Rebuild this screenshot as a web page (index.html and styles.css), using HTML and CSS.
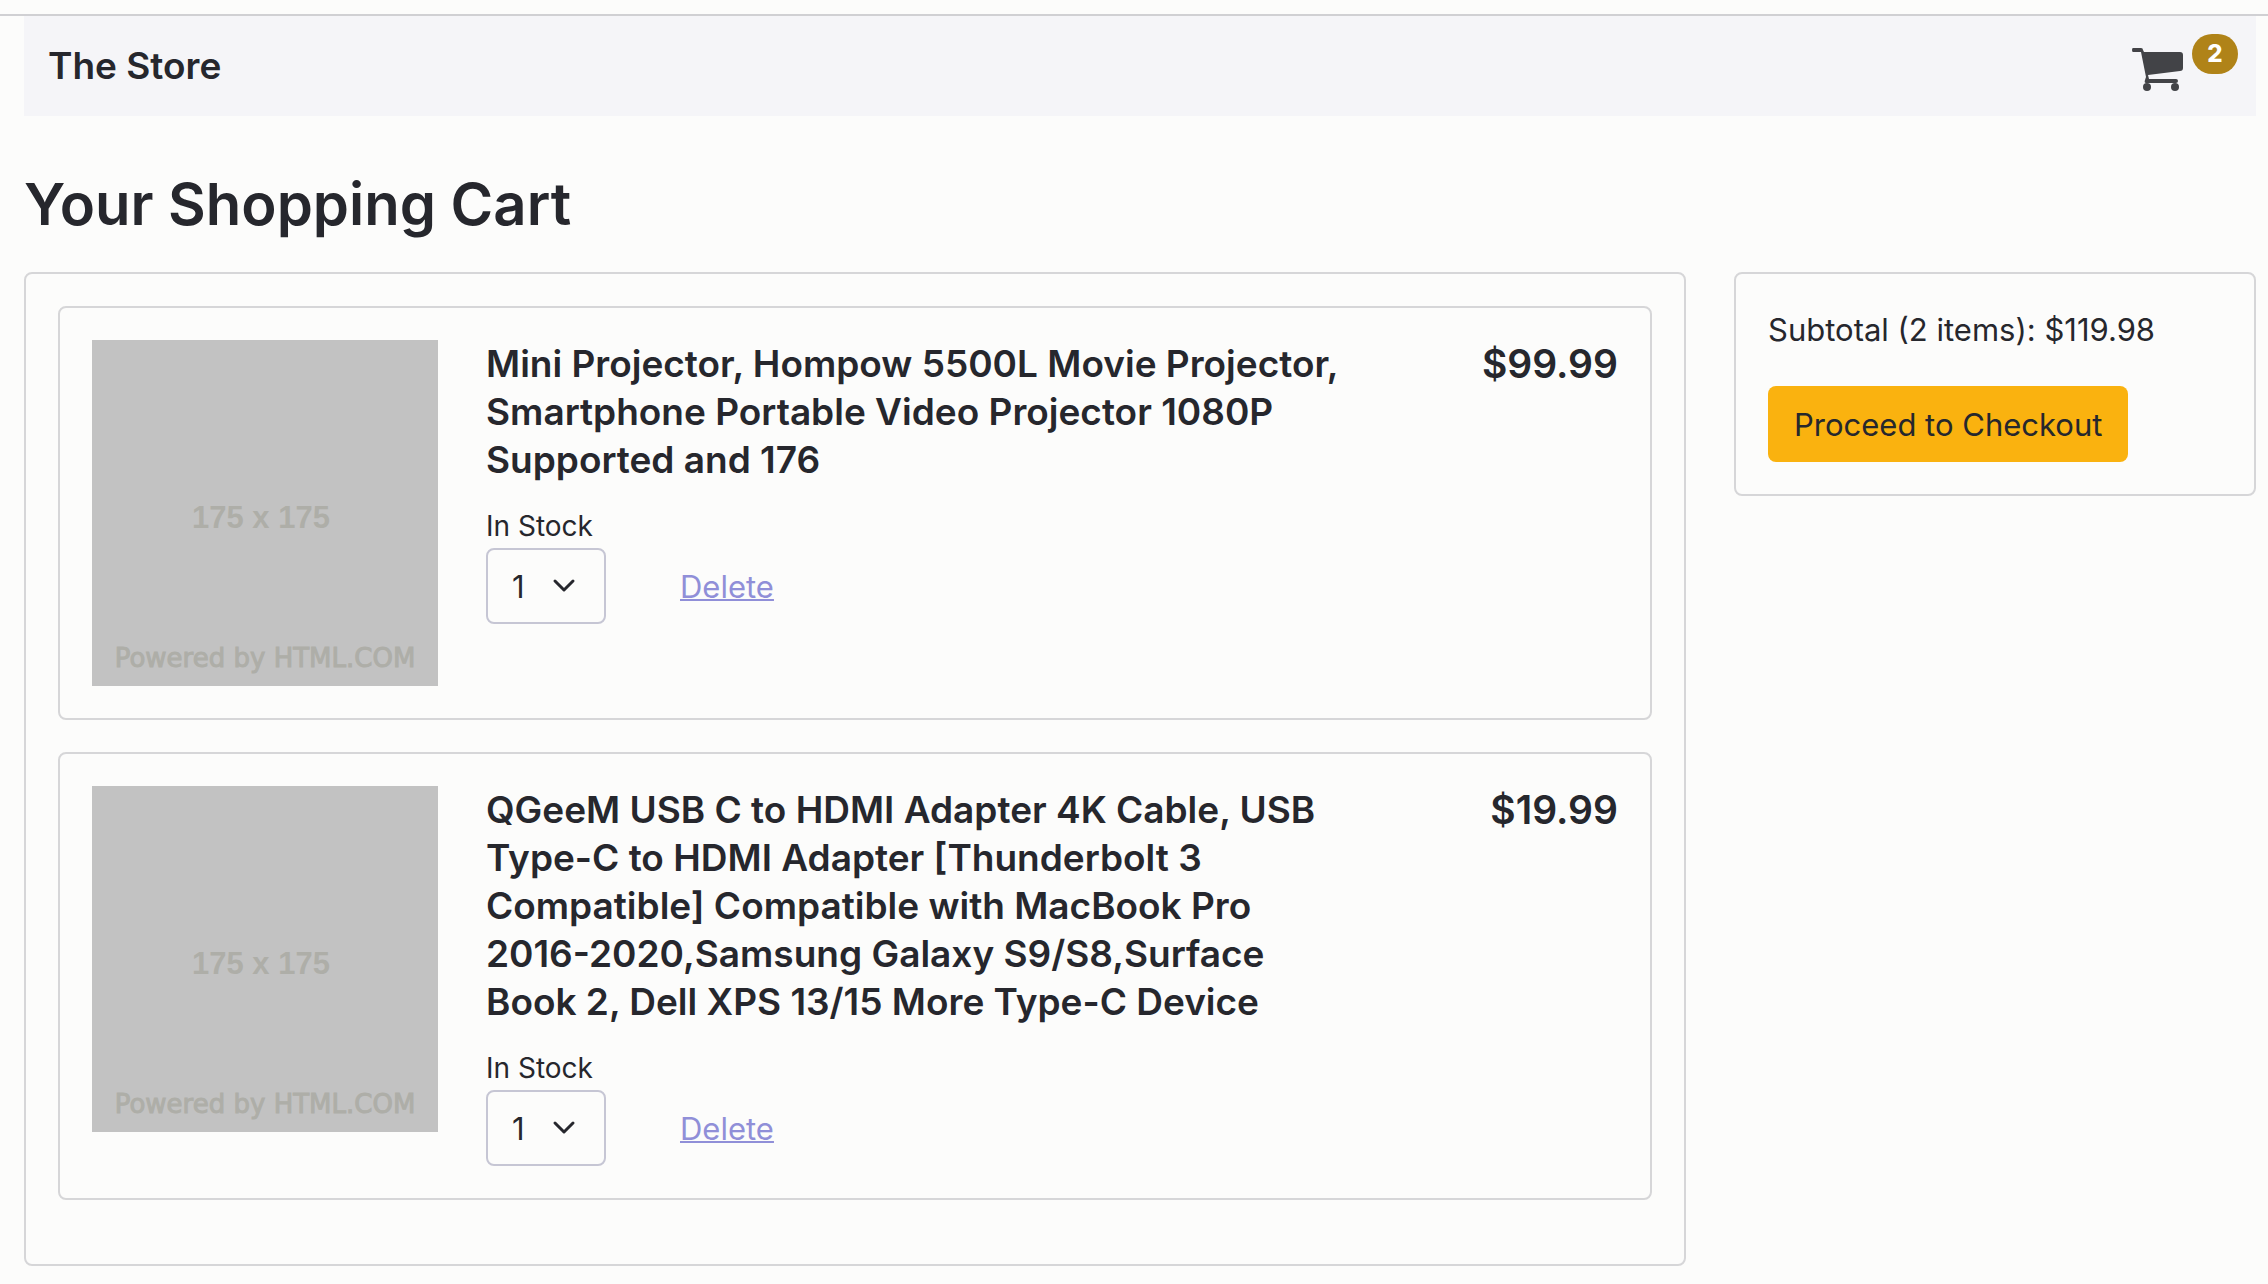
FILE: index.html
```html
<!DOCTYPE html>
<html lang="en">
<head>
<meta charset="utf-8">
<meta name="viewport" content="width=device-width, initial-scale=1">
<title>The Store</title>
<link rel="stylesheet" href="styles.css">
</head>
<body>
<div class="page">
  <header class="navbar">
    <a class="brand" href="#">The Store</a>
    <a class="cart-link" href="#" aria-label="Shopping cart">
      <svg class="cart-icon" viewBox="0 0 52 44" aria-hidden="true">
        <path d="M1 0H9Q11 0 11 2L12 4H48Q51 4 51 7V20Q51 23 48 23L16 27L17 31H44Q46 31 46 33Q46 35 44 35H14Q12 35 13 32L14 29L9 4H1Q0 4 0 2Q0 0 1 0Z"/>
        <circle cx="15" cy="39" r="4"/>
        <circle cx="43" cy="39" r="4"/>
      </svg>
      <span class="badge">2</span>
    </a>
  </header>

  <main>
    <h1 class="title">Your Shopping Cart</h1>
    <div class="columns">
      <section class="card items">
        <article class="card item">
          <div class="thumb">
            <span class="thumb-size">175 x 175</span>
            <span class="thumb-credit">Powered by HTML.COM</span>
          </div>
          <div class="details">
            <h2 class="name">Mini Projector, Hompow 5500L Movie Projector, Smartphone Portable Video Projector 1080P Supported and 176</h2>
            <label class="stock" for="qty-1">In Stock</label>
            <div class="controls">
              <span class="select-wrap">
                <select class="qty" id="qty-1"><option>1</option><option>2</option><option>3</option></select>
                <svg class="chevron" viewBox="0 0 24 16" aria-hidden="true"><path d="M3 3L12 12L21 3"/></svg>
              </span>
              <a class="delete" href="#">Delete</a>
            </div>
          </div>
          <p class="price">$99.99</p>
        </article>
        <article class="card item">
          <div class="thumb">
            <span class="thumb-size">175 x 175</span>
            <span class="thumb-credit">Powered by HTML.COM</span>
          </div>
          <div class="details">
            <h2 class="name">QGeeM USB C to HDMI Adapter 4K Cable, USB Type-C to HDMI Adapter [Thunderbolt 3 Compatible] Compatible with MacBook Pro 2016-2020,Samsung Galaxy S9/S8,Surface Book 2, Dell XPS 13/15 More Type-C Device</h2>
            <label class="stock" for="qty-2">In Stock</label>
            <div class="controls">
              <span class="select-wrap">
                <select class="qty" id="qty-2"><option>1</option><option>2</option><option>3</option></select>
                <svg class="chevron" viewBox="0 0 24 16" aria-hidden="true"><path d="M3 3L12 12L21 3"/></svg>
              </span>
              <a class="delete" href="#">Delete</a>
            </div>
          </div>
          <p class="price">$19.99</p>
        </article>
      </section>
      <aside class="card summary">
        <p class="subtotal">Subtotal (2 items): $119.98</p>
        <button class="checkout" type="button">Proceed to Checkout</button>
      </aside>
    </div>
  </main>
</div>
</body>
</html>
```
FILE: styles.css
```css
* {
  box-sizing: border-box;
}

body {
  margin: 0;
  padding-top: 14px;
  background: #fcfcfb;
  color: #26272d;
  font-family: Inter, "Liberation Sans", sans-serif;
  font-size: 31px;
  line-height: 48px;
}

h1,
h2,
p {
  margin: 0;
}

.page {
  border-top: 2px solid #d0d0d3;
  padding: 0 12px 16px 24px;
}

.navbar {
  display: flex;
  align-items: center;
  justify-content: space-between;
  height: 100px;
  padding: 0 18px 0 24px;
  background: #f5f5f8;
}

.brand {
  color: inherit;
  font-size: 37px;
  font-weight: 600;
  text-decoration: none;
}

.cart-link {
  display: flex;
  align-items: flex-start;
  gap: 8px;
  padding-bottom: 6px;
  color: inherit;
  text-decoration: none;
}

.cart-icon {
  width: 52px;
  height: 44px;
  margin-top: 14px;
  fill: #424347;
}

.badge {
  min-width: 46px;
  border-radius: 20px;
  background: #b08318;
  color: #fff;
  font-size: 24px;
  font-weight: 800;
  line-height: 40px;
  text-align: center;
}

.title {
  padding: 50px 0 30px;
  font-size: 58px;
  font-weight: 600;
  line-height: 76px;
}

.columns {
  display: grid;
  grid-template-columns: repeat(12, minmax(0, 1fr));
  column-gap: 48px;
  align-items: start;
}

.card {
  border: 2px solid #d6d6d8;
  border-radius: 8px;
  padding: 32px;
}

.items {
  grid-column: span 9;
}

.item {
  display: flex;
  align-items: flex-start;
  gap: 48px;
  margin-bottom: 32px;
}

.thumb {
  position: relative;
  display: flex;
  flex: none;
  align-items: center;
  justify-content: center;
  width: 346px;
  height: 346px;
  padding: 10px 8px 0 0;
  background: #c2c2c2;
  color: #aeaea8;
}

.thumb-size {
  font-family: "Liberation Sans", sans-serif;
  font-size: 31px;
  font-weight: 700;
}

.thumb-credit {
  position: absolute;
  right: 0;
  bottom: 4px;
  left: 0;
  font-family: "DejaVu Sans", sans-serif;
  font-size: 26px;
  text-align: center;
  -webkit-text-stroke: 1px currentColor;
}

.details {
  flex: 0 1 864px;
}

.name {
  margin-bottom: 20px;
  font-size: 37px;
  font-weight: 600;
  line-height: 48px;
}

.stock {
  display: block;
  font-size: 28px;
  line-height: 44px;
}

.controls {
  display: flex;
  align-items: center;
  gap: 74px;
}

.select-wrap {
  position: relative;
}

.qty {
  display: block;
  width: 120px;
  height: 76px;
  padding: 2px 24px 0;
  border: 2px solid #c6c6d4;
  border-radius: 8px;
  background: transparent;
  color: inherit;
  font: inherit;
  appearance: none;
}

.chevron {
  position: absolute;
  top: 30px;
  right: 30px;
  width: 24px;
  height: 16px;
  fill: none;
  stroke: #26272d;
  stroke-width: 3;
  stroke-linecap: round;
  stroke-linejoin: round;
  pointer-events: none;
}

.delete {
  padding-top: 2px;
  color: #908fd8;
  text-decoration-thickness: 2px;
}

.price {
  margin-left: auto;
  font-size: 39px;
  font-weight: 600;
}

.summary {
  grid-column: span 3;
}

.subtotal {
  margin-bottom: 32px;
}

.checkout {
  height: 76px;
  padding: 2px 26px 0;
  border: 0;
  border-radius: 8px;
  background: #fab20f;
  color: inherit;
  font: inherit;
}
```
